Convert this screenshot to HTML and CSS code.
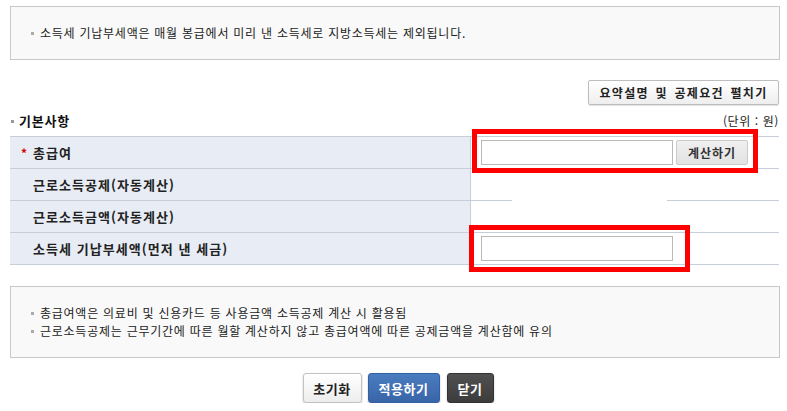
FILE: index.html
```html
<!DOCTYPE html>
<html lang="ko">
<head>
<meta charset="utf-8">
<title>근로소득 계산</title>
<link rel="stylesheet" href="styles.css">
</head>
<body>
<div class="page">
  <div class="info-box">
    <ul class="bullets">
      <li>소득세 기납부세액은 매월 봉급에서 미리 낸 소득세로 지방소득세는 제외됩니다.</li>
    </ul>
  </div>

  <div class="toolbar">
    <button class="btn-expand" type="button">요약설명 및 공제요건 펼치기</button>
  </div>

  <div class="title-row">
    <h3 class="section-title">기본사항</h3>
    <span class="unit">(단위 : 원)</span>
  </div>

  <div class="table-wrap">
    <div class="form-table">
      <div class="th"><span class="req">*</span>총급여</div>
      <div class="td"><input class="txt" type="text"><button class="btn-calc" type="button">계산하기</button></div>

      <div class="th"><span class="req"></span>근로소득공제(자동계산)</div>
      <div class="td"></div>

      <div class="th"><span class="req"></span>근로소득금액(자동계산)</div>
      <div class="td td-gap"></div>

      <div class="th"><span class="req"></span>소득세 기납부세액(먼저 낸 세금)</div>
      <div class="td"><input class="txt" type="text"></div>
    </div>
    <div class="mark mark-1"></div>
    <div class="mark mark-2"></div>
  </div>

  <div class="info-box notes">
    <ul class="bullets">
      <li>총급여액은 의료비 및 신용카드 등 사용금액 소득공제 계산 시 활용됨</li>
      <li>근로소득공제는 근무기간에 따른 월할 계산하지 않고 총급여액에 따른 공제금액을 계산함에 유의</li>
    </ul>
  </div>

  <div class="actions">
    <button class="btn btn-reset" type="button">초기화</button>
    <button class="btn btn-apply" type="button">적용하기</button>
    <button class="btn btn-close" type="button">닫기</button>
  </div>
</div>
</body>
</html>
```

FILE: styles.css
```css
* { box-sizing: border-box; }
html, body { margin: 0; padding: 0; background: #fff; }
body {
  font-family: "Noto Sans CJK KR", "Noto Sans", sans-serif;
  font-size: 12px;
  color: #222;
  line-height: 18px;
}
.page {
  width: 770px;
  margin-left: 10px;
  padding-top: 6px;
}
.info-box {
  border: 1px solid #c8c8c8;
  background: #f9f9f9;
  padding: 17px 20px;
}
.bullets { list-style: none; margin: 0; padding: 0; }
.bullets li {
  height: 18px;
  white-space: nowrap;
  color: #222;
  letter-spacing: 0.75px;
}
.bullets li::before {
  content: "";
  display: inline-block;
  width: 3px;
  height: 3px;
  background: #aaa;
  margin-right: 6px;
  vertical-align: middle;
  position: relative;
  top: -1px;
}
.toolbar {
  display: flex;
  justify-content: flex-end;
  margin-top: 20px;
  padding-right: 1px;
}
.btn-expand {
  height: 25px;
  width: 191px;
  padding: 0;
  font-family: inherit;
  font-size: 12px;
  font-weight: bold;
  color: #222;
  letter-spacing: 1.3px;
  word-spacing: 2px;
  background: linear-gradient(#ffffff, #eeeeee);
  border: 1px solid #bdbdbd;
  border-radius: 2px;
  box-shadow: 0 1px 1px rgba(0,0,0,0.12);
}
.title-row {
  display: flex;
  justify-content: space-between;
  align-items: center;
  margin-top: 7px;
  height: 18px;
  margin-bottom: 6px;
}
.section-title {
  margin: 0;
  font-size: 13px;
  font-weight: bold;
  color: #111;
  letter-spacing: 0.8px;
  display: flex;
  align-items: center;
}
.section-title::before {
  content: "";
  width: 3px;
  height: 3px;
  background: #999;
  margin: 0 5px 0 1px;
}
.unit {
  font-size: 12px;
  color: #222;
  letter-spacing: 0.6px;
  padding-right: 1px;
}
.table-wrap {
  position: relative;
  width: 769px;
}
.form-table {
  display: grid;
  grid-template-columns: 461px 308px;
  border-top: 1px solid #c5ced9;
}
.th, .td {
  height: 32px;
  border-bottom: 1px solid #c5ced9;
  display: flex;
  align-items: center;
}
.th {
  background: #e8ecf5;
  border-right: 1px solid #c5ced9;
  padding-left: 11px;
  font-size: 13px;
  font-weight: bold;
  color: #222;
  letter-spacing: 1.05px;
}
.req {
  display: inline-block;
  width: 12px;
  color: #d40000;
  font-size: 12px;
  font-weight: bold;
  letter-spacing: 0;
}
.td {
  padding-left: 10px;
  background: #fff;
}
.td-gap {
  background: linear-gradient(to right, #c5ced9 41px, #fff 41px, #fff 196px, #c5ced9 196px) top left / 100% 1px no-repeat, #fff;
  margin-top: -1px;
  height: 33px;
  padding-top: 1px;
}
.txt {
  width: 192px;
  height: 25px;
  border: 1px solid #b9b9b9;
  background: #fff;
  margin: 0;
  padding: 0 4px;
  font-family: inherit;
}
.btn-calc {
  margin-left: 3px;
  width: 72px;
  height: 25px;
  padding: 0;
  font-family: inherit;
  font-size: 12px;
  font-weight: bold;
  color: #333;
  letter-spacing: 1px;
  background: linear-gradient(#f0f0f0, #e2e2e2);
  border: 1px solid #cbcbcb;
  border-radius: 2px;
}
.mark {
  position: absolute;
  border: 5px solid #ff0000;
  pointer-events: none;
}
.mark-1 { left: 462px; top: -7px; width: 286px; height: 44px; }
.mark-2 { left: 459px; top: 89px; width: 221px; height: 47px; }
.notes { margin-top: 21px; }
.actions {
  display: flex;
  justify-content: center;
  gap: 6px;
  margin-top: 15px;
  padding-left: 6px;
}
.btn {
  height: 30px;
  padding: 0;
  font-family: inherit;
  font-size: 13px;
  font-weight: bold;
  letter-spacing: 0.5px;
  border-radius: 3px;
  box-shadow: 0 1px 2px rgba(0,0,0,0.25);
}
.btn-reset {
  width: 59px;
  color: #222;
  background: linear-gradient(#ffffff, #ededed);
  border: 1px solid #c2c2c2;
}
.btn-apply {
  width: 72px;
  color: #fff;
  background: linear-gradient(#4a7cc0, #3965a8);
  border: 1px solid #33609f;
}
.btn-close {
  width: 47px;
  margin-left: 1px;
  color: #fff;
  background: linear-gradient(#505050, #3c3c3c);
  border: 1px solid #333;
}
```
